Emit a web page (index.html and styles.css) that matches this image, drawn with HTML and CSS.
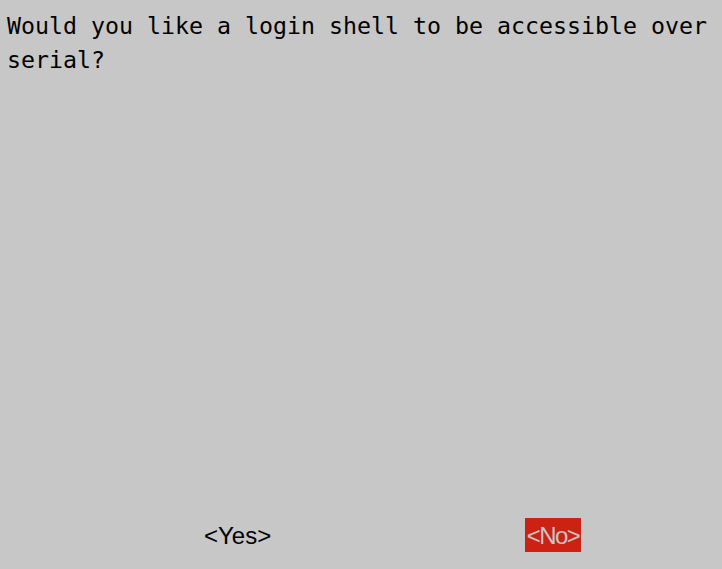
FILE: index.html
```html
<!DOCTYPE html>
<html lang="en">
<head>
<meta charset="utf-8">
<title>Serial login shell</title>
<link rel="stylesheet" href="styles.css">
</head>
<body>
<main class="term">
  <div class="message">
    <div class="line">Would you like a login shell to be accessible over</div>
    <div class="line">serial?</div>
  </div>
  <div class="buttons">
    <span class="btn yes">&lt;Yes&gt;</span>
    <span class="btn no">&lt;No&gt;</span>
  </div>
</main>
</body>
</html>
```
FILE: styles.css
```css
html, body {
  margin: 0;
  padding: 0;
  background: #c7c7c7;
}
body {
  width: 722px;
  height: 569px;
  overflow: hidden;
}
.term {
  padding: 8px 7px 0 7px;
  display: flex;
  flex-direction: column;
}
.message {
  height: 510px;
  font-family: "DejaVu Sans Mono", monospace;
  font-size: 23.25px;
  color: #000;
}
.line {
  height: 34px;
  line-height: 34px;
  padding-top: 1px;
  box-sizing: border-box;
  white-space: pre;
}
.buttons {
  display: flex;
  height: 34px;
  padding-left: 196px;
  gap: 250px;
}
.btn {
  display: block;
  height: 34px;
  line-height: 35px;
  font-family: "Liberation Sans", Arial, sans-serif;
  font-size: 24px;
  white-space: pre;
  overflow: hidden;
}
.yes {
  width: 72px;
  color: #000;
  padding-left: 1px;
  box-sizing: border-box;
}
.no {
  width: 56px;
  background: #cb2214;
  color: #c7c7c7;
  text-align: center;
  letter-spacing: -1.5px;
}
```
